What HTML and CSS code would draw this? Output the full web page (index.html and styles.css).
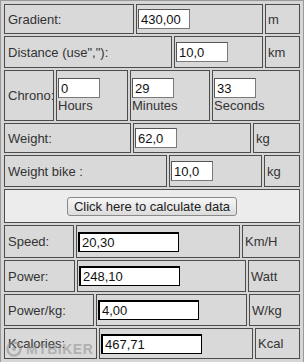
FILE: index.html
```html
<!DOCTYPE html>
<html lang="en">

<head>
    <meta charset="UTF-8">
    <title>Cycling calculator</title>
    <link rel="stylesheet" href="styles.css">
</head>

<body>
    <div class="form">
        <div class="row gradient">
            <div class="cell label">Gradient:</div>
            <div class="cell"><input class="field" type="text" value="430,00"></div>
            <div class="cell unit">m</div>
        </div>
        <div class="row distance">
            <div class="cell label">Distance (use","):</div>
            <div class="cell"><input class="field" type="text" value="10,0"></div>
            <div class="cell unit">km</div>
        </div>
        <div class="row chrono">
            <div class="cell label">Chrono:</div>
            <div class="cell stack"><input class="field small" type="text" value="0">Hours</div>
            <div class="cell stack"><input class="field small" type="text" value="29">Minutes</div>
            <div class="cell stack"><input class="field small" type="text" value="33">Seconds</div>
        </div>
        <div class="row weight">
            <div class="cell label">Weight:</div>
            <div class="cell"><input class="field small" type="text" value="62,0"></div>
            <div class="cell unit">kg</div>
        </div>
        <div class="row bike">
            <div class="cell label">Weight bike :</div>
            <div class="cell"><input class="field small" type="text" value="10,0"></div>
            <div class="cell unit">kg</div>
        </div>
        <div class="row action">
            <div class="cell center"><button class="calc">Click here to calculate data</button></div>
        </div>
        <div class="row speed">
            <div class="cell label">Speed:</div>
            <div class="cell"><input class="field result" type="text" value="20,30"></div>
            <div class="cell unit">Km/H</div>
        </div>
        <div class="row power">
            <div class="cell label">Power:</div>
            <div class="cell"><input class="field result" type="text" value="248,10"></div>
            <div class="cell unit">Watt</div>
        </div>
        <div class="row powerkg">
            <div class="cell label">Power/kg:</div>
            <div class="cell"><input class="field result" type="text" value="4,00"></div>
            <div class="cell unit">W/kg</div>
        </div>
        <div class="row kcal">
            <div class="cell label">Kcalories:</div>
            <div class="cell"><input class="field result" type="text" value="467,71"></div>
            <div class="cell unit">Kcal</div>
        </div>
    </div>

    <div class="watermark">
        <svg width="16" height="16" viewBox="0 0 16 16">
            <circle cx="8" cy="8" r="6.5" fill="none" stroke="currentColor" stroke-width="2.5"/>
            <circle cx="8" cy="8" r="2" fill="currentColor"/>
        </svg>
        <span>MTBIKER</span>
    </div>
</body>

</html>
```

FILE: styles.css
```css
body {
    margin: 0;
    background: #d6d6d6;
    font-family: 'Liberation Sans', Arial, sans-serif;
    font-size: 13px;
    color: #333;
}

.form {
    width: 296px;
    height: 356px;
    padding: 3px;
    border: 1px solid #9a9a9a;
    display: flex;
    flex-direction: column;
    gap: 2px;
}

.row {
    display: grid;
    gap: 2px;
}

.cell {
    border: 1px solid #4c4c4c;
    background: #d9d9d9;
    display: flex;
    align-items: center;
    padding: 0 1px;
    min-width: 0;
}

.label {
    padding-left: 3px;
}

.unit {
    padding-left: 2px;
}

.stack {
    flex-direction: column;
    align-items: flex-start;
    justify-content: center;
}

.center {
    justify-content: center;
    background: #ececec;
}

.field {
    width: 52px;
    height: 20px;
    box-sizing: border-box;
    margin: 0;
    padding: 0 2px;
    border: 1px solid #7a7a7a;
    border-top-color: #555;
    border-left-color: #555;
    background: #fff;
    font-family: inherit;
    font-size: 13px;
    color: #111;
}

.field.small {
    width: 42px;
}

.field.result {
    width: 101px;
    border: 1px solid #000;
    border-top-width: 2px;
    border-left-width: 2px;
}

.calc {
    height: 19px;
    padding: 0 6px;
    border: 1px solid #8a8a8a;
    border-radius: 3px;
    background: linear-gradient(#f6f6f6, #dcdcdc);
    font-family: inherit;
    font-size: 13px;
    color: #222;
}

.gradient { height: 30px; grid-template-columns: 130px 127px 35px; }
.distance { height: 32px; grid-template-columns: 168px 89px 35px; }
.chrono { height: 51px; grid-template-columns: 50px 72px 80px 88px; }
.weight { height: 30px; grid-template-columns: 127px 118px 47px; }
.bike { height: 32px; grid-template-columns: 163px 93px 36px; }
.action { height: 34px; grid-template-columns: 1fr; }
.speed { height: 33px; grid-template-columns: 70px 164px 58px; }
.power { height: 32px; grid-template-columns: 71px 169px 52px; }
.powerkg { height: 32px; grid-template-columns: 90px 151px 51px; }
.kcal { height: 31px; grid-template-columns: 93px 154px 45px; }

.watermark {
    position: absolute;
    left: 6px;
    top: 341px;
    display: flex;
    align-items: center;
    gap: 4px;
    color: rgba(140, 140, 140, 0.55);
    font-weight: bold;
    font-size: 14px;
    letter-spacing: 0.5px;
}
```
